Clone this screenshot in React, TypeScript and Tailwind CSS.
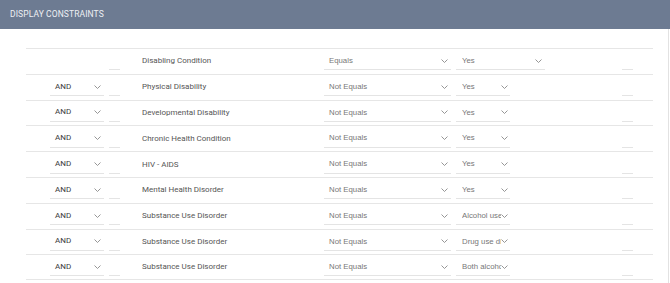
import React from 'react';

type Row = {
  joiner?: string;
  field: string;
  op: string;
  value: string;
  wide?: boolean;
};

const rows: Row[] = [
  { field: 'Disabling Condition', op: 'Equals', value: 'Yes', wide: true },
  { joiner: 'AND', field: 'Physical Disability', op: 'Not Equals', value: 'Yes' },
  { joiner: 'AND', field: 'Developmental Disability', op: 'Not Equals', value: 'Yes' },
  { joiner: 'AND', field: 'Chronic Health Condition', op: 'Not Equals', value: 'Yes' },
  { joiner: 'AND', field: 'HIV - AIDS', op: 'Not Equals', value: 'Yes' },
  { joiner: 'AND', field: 'Mental Health Disorder', op: 'Not Equals', value: 'Yes' },
  { joiner: 'AND', field: 'Substance Use Disorder', op: 'Not Equals', value: 'Alcohol use disorder' },
  { joiner: 'AND', field: 'Substance Use Disorder', op: 'Not Equals', value: 'Drug use disorder' },
  { joiner: 'AND', field: 'Substance Use Disorder', op: 'Not Equals', value: 'Both alcohol and drug use disorders' },
];

function Chevron() {
  return (
    <svg width="7" height="4" viewBox="0 0 7 4" className="shrink-0">
      <polyline points="0.5,0.5 3.5,3.5 6.5,0.5" fill="none" stroke="#8a8a8a" strokeWidth="0.9" />
    </svg>
  );
}

function Blank() {
  return <div className="h-[18px] w-[11px] shrink-0 border-b border-[#e4e4e4]" />;
}

export default function App() {
  return (
    <div className="w-[670px] h-[283px] overflow-hidden bg-white font-['Roboto',sans-serif]">
      {/* Panel header */}
      <div className="h-[29px] bg-[#6d7b92] flex items-center px-[10px]">
        <span className="text-[8.5px] tracking-[0.1px] text-[#eef0f4]">DISPLAY CONSTRAINTS</span>
      </div>

      <div className="w-[669px] h-[254px] border-r border-[#e2e2e2] pt-[19px] pl-[26px]">
        <div className="w-[627px]">
          {rows.map((r, i) => (
            <div
              key={i}
              className="h-[25.8px] flex items-center border-t border-[#e6e6e6] last:border-b"
            >
              <div className="w-[24px] shrink-0" />

              {/* joiner select */}
              {r.joiner ? (
                <div className="h-[18px] w-[54px] shrink-0 border-b border-[#e4e4e4] flex items-center justify-between pl-[5px] pr-[3px]">
                  <span className="text-[8px] text-[#3a3a3a]">{r.joiner}</span>
                  <Chevron />
                </div>
              ) : (
                <div className="w-[54px] shrink-0" />
              )}

              <div className="w-[5px] shrink-0" />
              <Blank />

              {/* field label */}
              <div className="w-[204px] shrink-0 pl-[22px] text-[8px] text-[#555] whitespace-nowrap">
                {r.field}
              </div>

              {/* operator select */}
              <div className="h-[18px] w-[127px] shrink-0 border-b border-[#e4e4e4] flex items-center justify-between pl-[5px] pr-[3px] font-['Liberation_Sans',sans-serif]">
                <span className="text-[7.8px] text-[#777]">{r.op}</span>
                <Chevron />
              </div>

              <div className="w-[5px] shrink-0" />

              {/* value select */}
              <div
                className={
                  r.wide
                    ? 'h-[18px] w-[89px] shrink-0 border-b border-[#e4e4e4] flex items-center pl-[6px] pr-[3px] font-[\'Liberation_Sans\',sans-serif]'
                    : 'h-[18px] w-[54px] shrink-0 border-b border-[#e4e4e4] flex items-center pl-[6px] pr-[2px] font-[\'Liberation_Sans\',sans-serif]'
                }
              >
                <span className="flex-1 min-w-0 overflow-hidden whitespace-nowrap text-[7.8px] text-[#777]">
                  {r.value}
                </span>
                <Chevron />
              </div>

              <div className="flex-1" />
              <Blank />
              <div className="w-[20px] shrink-0" />
            </div>
          ))}
        </div>
      </div>
    </div>
  );
}
